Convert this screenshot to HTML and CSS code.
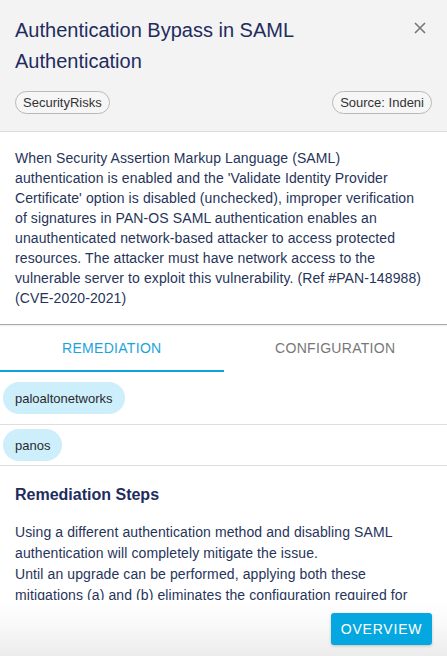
FILE: index.html
```html
<!DOCTYPE html>
<html lang="en">
<head>
<meta charset="utf-8">
<title>Authentication Bypass in SAML Authentication</title>
<link rel="stylesheet" href="styles.css">
</head>
<body>
<div class="panel">
  <div class="content">
    <header class="header">
      <div class="title-row">
        <h1 class="title">Authentication Bypass in SAML Authentication</h1>
        <button class="close" aria-label="Close">
          <svg width="12" height="12" viewBox="0 0 12 12"><path d="M1 1L11 11M11 1L1 11" stroke="#777" stroke-width="1.6" fill="none"/></svg>
        </button>
      </div>
      <div class="tags">
        <span class="tag">SecurityRisks</span>
        <span class="tag">Source: Indeni</span>
      </div>
    </header>
    <section class="desc">
      When Security Assertion Markup Language (SAML) authentication is enabled and the 'Validate Identity Provider Certificate' option is disabled (unchecked), improper verification of signatures in PAN-OS SAML authentication enables an unauthenticated network-based attacker to access protected resources. The attacker must have network access to the vulnerable server to exploit this vulnerability. (Ref #PAN-148988) (CVE-2020-2021)
    </section>
    <nav class="tabs">
      <div class="tab active">REMEDIATION</div>
      <div class="tab">CONFIGURATION</div>
    </nav>
    <div class="vendors">
      <div class="vendor-row first"><span class="pill">paloaltonetworks</span></div>
      <div class="vendor-row"><span class="pill">panos</span></div>
    </div>
    <section class="steps">
      <h2 class="steps-title">Remediation Steps</h2>
      <p class="steps-text">Using a different authentication method and disabling SAML authentication will completely mitigate the issue.<br>Until an upgrade can be performed, applying both these mitigations (a) and (b) eliminates the configuration required for exploitation of this vulnerability.</p>
    </section>
  </div>
  <div class="footer">
    <button class="overview">OVERVIEW</button>
  </div>
</div>
</body>
</html>
```
FILE: styles.css
```css
* { box-sizing: border-box; }
html, body { margin: 0; padding: 0; }
body {
  width: 447px;
  height: 656px;
  overflow: hidden;
  background: #fff;
  font-family: "Liberation Sans", Arial, sans-serif;
  color: #263256;
}
.panel {
  height: 656px;
  display: flex;
  flex-direction: column;
  overflow: hidden;
}
.content {
  flex: 1;
  min-height: 0;
  overflow: hidden;
}
.header {
  background: #f3f3f3;
  padding: 15px 15px 17px 15px;
  border-bottom: 1px solid #d8dde3;
}
.title-row {
  display: flex;
  justify-content: space-between;
  align-items: flex-start;
}
.title {
  margin: 0;
  font-size: 20px;
  line-height: 31px;
  font-weight: normal;
  color: #1f2c5e;
  max-width: 370px;
}
.close {
  border: none;
  background: transparent;
  padding: 0;
  margin: 6px 5px 0 0;
  width: 14px;
  height: 14px;
  display: flex;
  align-items: center;
  justify-content: center;
}
.tags {
  display: flex;
  justify-content: space-between;
  margin-top: 14px;
}
.tag {
  display: inline-flex;
  align-items: center;
  height: 23px;
  padding: 0 7px;
  border: 1px solid #b9b9b9;
  border-radius: 12px;
  font-size: 13px;
  color: #333;
  background: #f6f6f6;
}
.desc {
  padding: 16px 22px 16px 15px;
  font-size: 14px;
  line-height: 20px;
  letter-spacing: 0.1px;
  color: #27345a;
  border-bottom: 1px solid #a9a9a9;
  box-shadow: 0 1px 1px rgba(0,0,0,0.06);
}
.tabs {
  display: flex;
  height: 47px;
}
.tab {
  flex: 1;
  display: flex;
  align-items: center;
  justify-content: center;
  font-size: 14px;
  letter-spacing: 0.3px;
  color: #777;
  border-bottom: 2px solid transparent;
}
.tab.active {
  color: #1ba4db;
  border-bottom-color: #0ea2dd;
}
.vendor-row {
  padding: 4px 3px 4px 3px;
  border-bottom: 1px solid #dedede;
}
.vendor-row.first {
  padding-top: 10px;
  padding-bottom: 10px;
}
.pill {
  display: inline-flex;
  align-items: center;
  height: 32px;
  padding: 0 12px;
  border-radius: 16px;
  background: #cdeefb;
  color: #2a2a2a;
  font-size: 13px;
}
.steps {
  padding: 19px 22px 0 15px;
}
.steps-title {
  margin: 0;
  font-size: 16px;
  line-height: 20px;
  font-weight: bold;
  color: #1f2c5e;
}
.steps-text {
  margin: 17px 0 0 0;
  font-size: 14px;
  line-height: 21px;
  letter-spacing: 0.1px;
  color: #27345a;
}
.footer {
  flex: 0 0 56px;
  background: linear-gradient(to bottom, #ffffff 0%, #f9f9f9 45%, #ececec 100%);
  display: flex;
  justify-content: flex-end;
  align-items: flex-start;
  padding: 13px 15px 0 0;
}
.overview {
  width: 101px;
  height: 32px;
  border: none;
  border-radius: 3px;
  background: #05a7e0;
  color: #fff;
  font-family: "Liberation Sans", Arial, sans-serif;
  font-size: 14px;
  letter-spacing: 0.8px;
  box-shadow: 0 1px 3px rgba(0,0,0,0.2);
  padding: 0;
}
```
